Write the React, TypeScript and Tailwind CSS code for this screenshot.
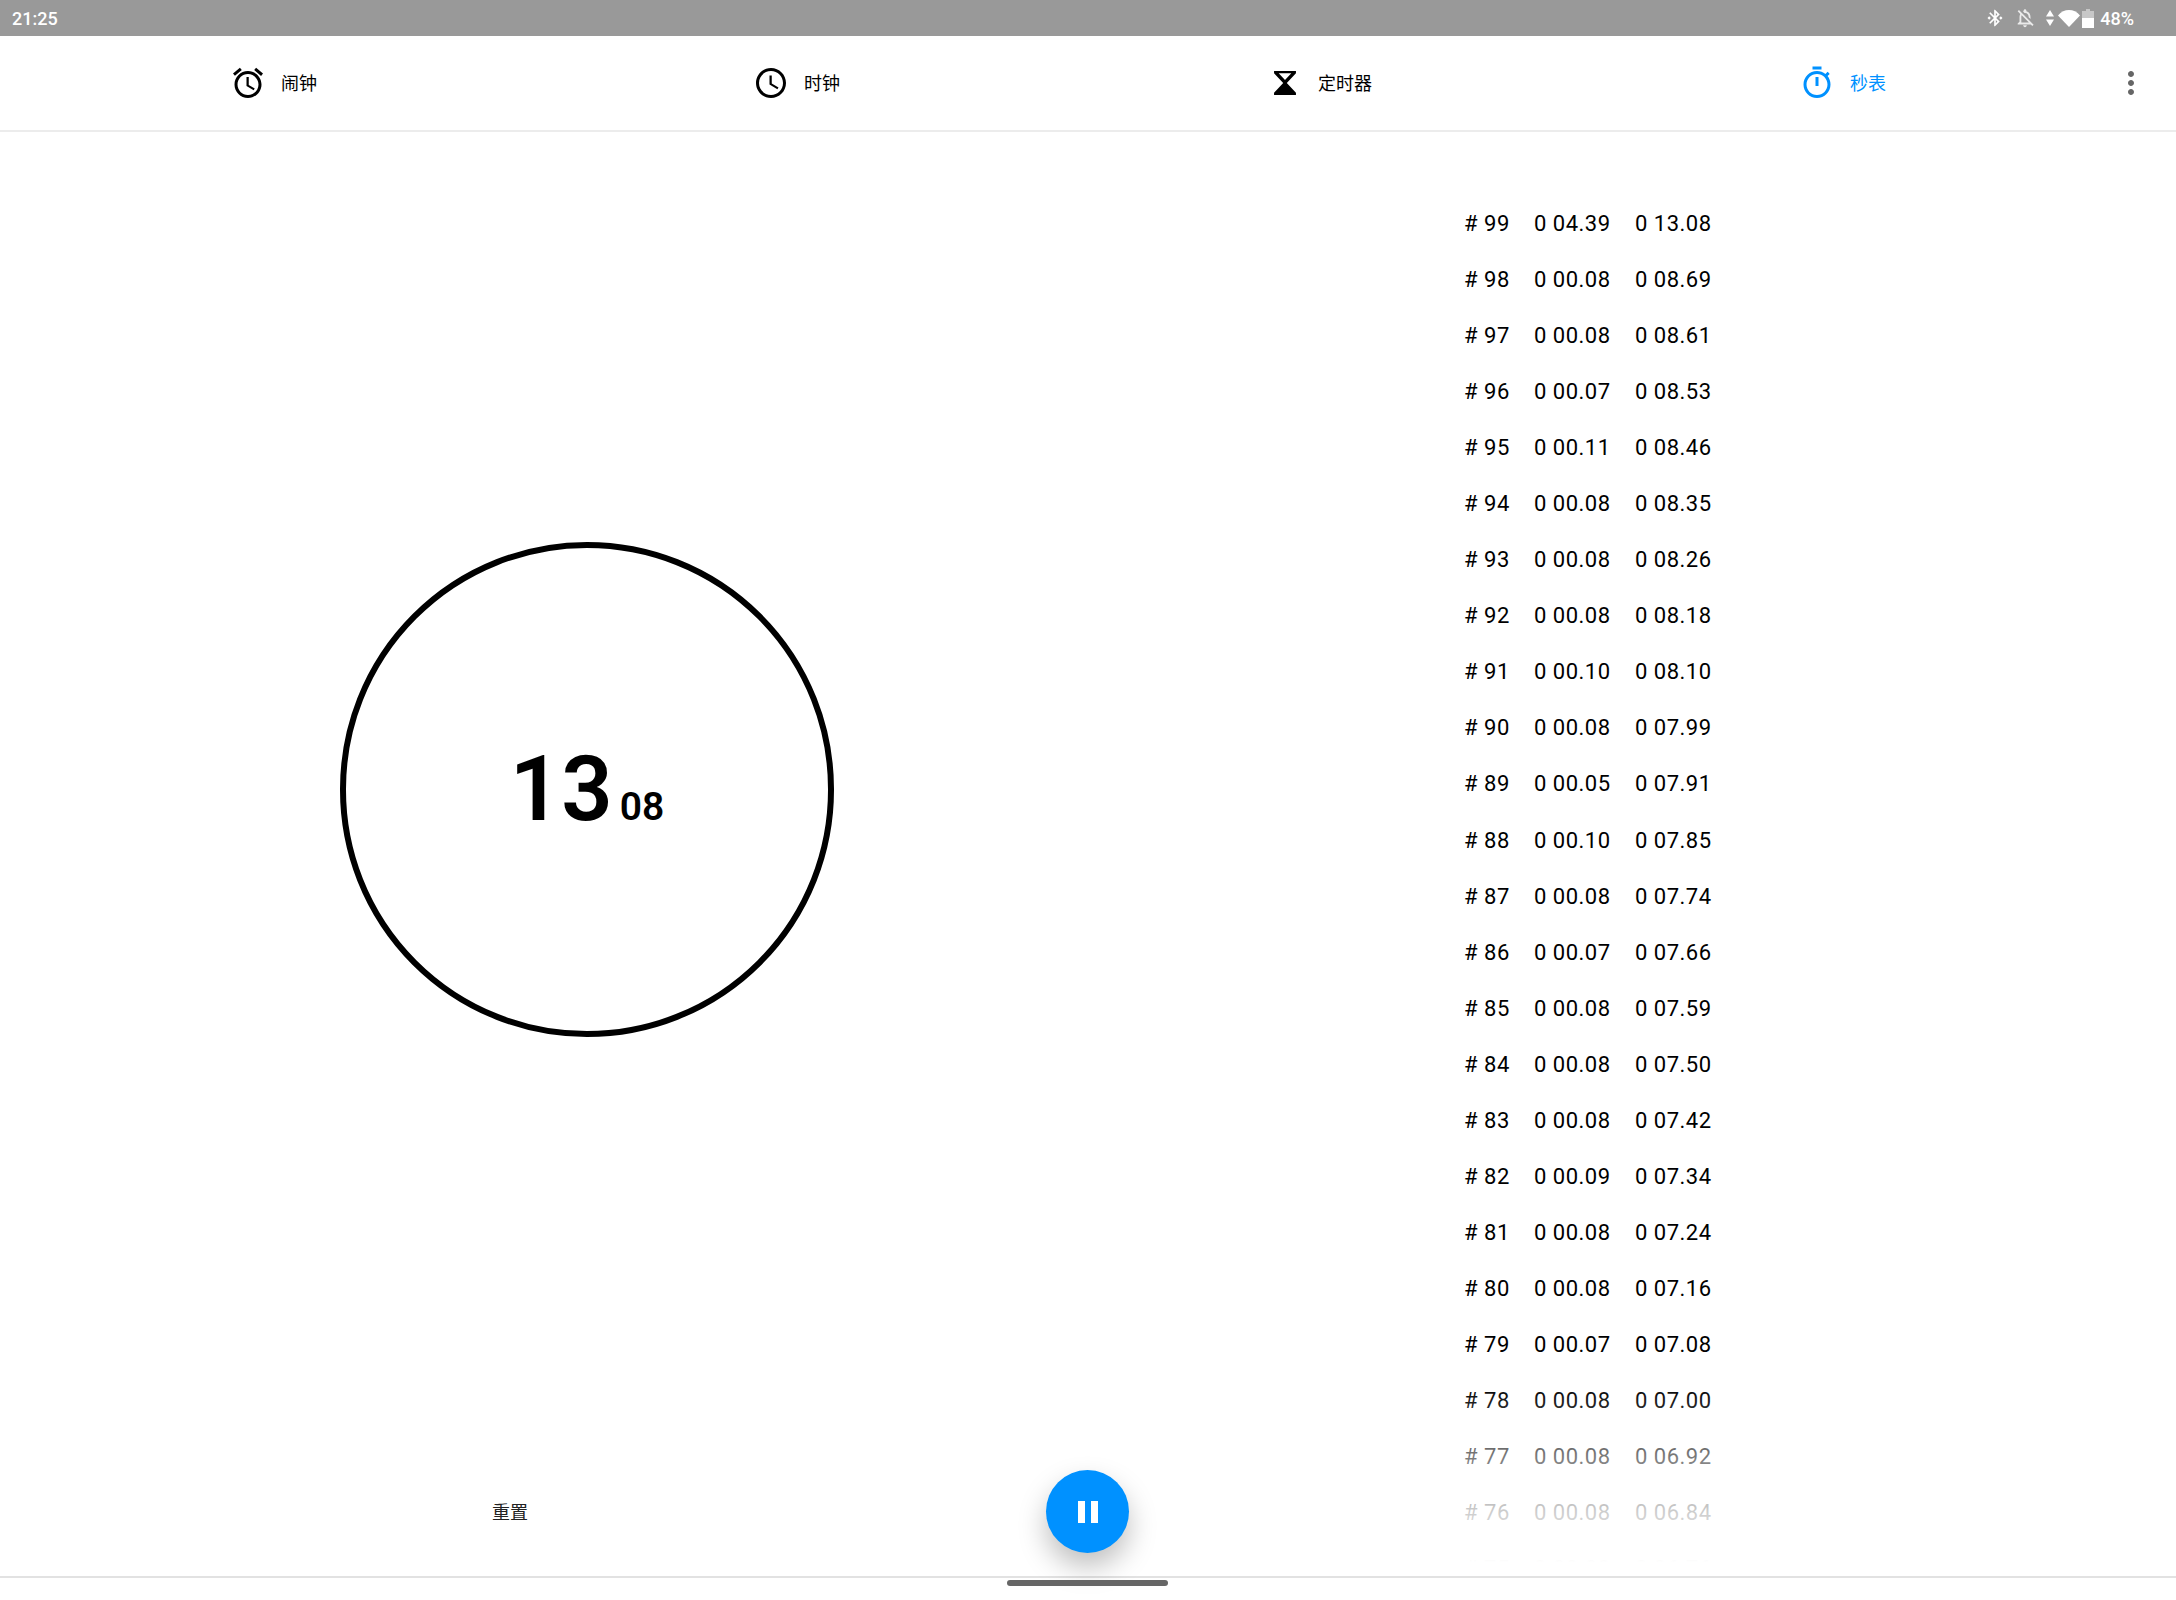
import React from 'react';

const laps = [
  ['99', '0 04.39', '0 13.08'],
  ['98', '0 00.08', '0 08.69'],
  ['97', '0 00.08', '0 08.61'],
  ['96', '0 00.07', '0 08.53'],
  ['95', '0 00.11', '0 08.46'],
  ['94', '0 00.08', '0 08.35'],
  ['93', '0 00.08', '0 08.26'],
  ['92', '0 00.08', '0 08.18'],
  ['91', '0 00.10', '0 08.10'],
  ['90', '0 00.08', '0 07.99'],
  ['89', '0 00.05', '0 07.91'],
  ['88', '0 00.10', '0 07.85'],
  ['87', '0 00.08', '0 07.74'],
  ['86', '0 00.07', '0 07.66'],
  ['85', '0 00.08', '0 07.59'],
  ['84', '0 00.08', '0 07.50'],
  ['83', '0 00.08', '0 07.42'],
  ['82', '0 00.09', '0 07.34'],
  ['81', '0 00.08', '0 07.24'],
  ['80', '0 00.08', '0 07.16'],
  ['79', '0 00.07', '0 07.08'],
  ['78', '0 00.08', '0 07.00'],
  ['77', '0 00.08', '0 06.92'],
  ['76', '0 00.08', '0 06.84'],
  ['75', '0 00.08', '0 06.76'],
];

function MaterialIcon({ d, className }: { d: string; className?: string }): JSX.Element {
  return (
    <svg viewBox="0 0 24 24" fill="currentColor" className={className}>
      <path d={d} />
    </svg>
  );
}

const ALARM =
  'M22 5.72l-4.6-3.86-1.29 1.53 4.6 3.86L22 5.72zM7.88 3.39L6.6 1.86 2 5.71l1.29 1.53 4.59-3.85zM12.5 8H11v6l4.75 2.85.75-1.23-4-2.37V8zM12 4c-4.97 0-9 4.03-9 9s4.02 9 9 9c4.97 0 9-4.03 9-9s-4.03-9-9-9zm0 16c-3.87 0-7-3.13-7-7s3.13-7 7-7 7 3.13 7 7-3.13 7-7 7z';
const CLOCK =
  'M11.99 2C6.47 2 2 6.48 2 12s4.47 10 9.99 10C17.52 22 22 17.52 22 12S17.52 2 11.99 2zM12 20c-4.42 0-8-3.58-8-8s3.58-8 8-8 8 3.58 8 8-3.58 8-8 8zM12.5 7H11v6l5.25 3.15.75-1.23-4.5-2.67z';
const TIMER =
  'M15 1H9v2h6V1zm-4 13h2V8h-2v6zm8.03-6.61l1.42-1.42c-.43-.51-.9-.99-1.41-1.41l-1.42 1.42C16.07 4.74 14.12 4 12 4c-4.97 0-9 4.03-9 9s4.02 9 9 9 9-4.03 9-9c0-2.12-.74-4.07-1.97-5.61zM12 20c-3.87 0-7-3.13-7-7s3.13-7 7-7 7 3.13 7 7-3.13 7-7 7z';
const MORE =
  'M12 8c1.1 0 2-.9 2-2s-.9-2-2-2-2 .9-2 2 .9 2 2 2zm0 2c-1.1 0-2 .9-2 2s.9 2 2 2 2-.9 2-2-.9-2-2-2zm0 6c-1.1 0-2 .9-2 2s.9 2 2 2 2-.9 2-2-.9-2-2-2z';
const BLUETOOTH =
  'M7 12l-2-2-2 2 2 2 2-2zm10.71-4.29L12 2h-1v7.59L6.41 5 5 6.41 10.59 12 5 17.59 6.41 19 11 14.41V22h1l5.71-5.71-4.3-4.29 4.3-4.29zM13 5.83l1.88 1.88L13 9.59V5.83zm1.88 10.46L13 18.17v-3.76l1.88 1.88zM19 10l-2 2 2 2 2-2-2-2z';
const BELL_OFF =
  'M12 22c1.1 0 2-.9 2-2h-4c0 1.1.9 2 2 2zm0-15.5c2.49 0 4 2.02 4 4.5v.1l2 2V11c0-3.07-1.63-5.64-4.5-6.32V4c0-.83-.67-1.5-1.5-1.5s-1.5.67-1.5 1.5v.68c-.24.06-.47.15-.69.23l1.64 1.64c.18-.02.37-.05.55-.05zM5.41 3.35L4 4.76l2.81 2.81C6.29 8.57 6 9.74 6 11v5l-2 2v1h14.24l1.74 1.74 1.41-1.41L5.41 3.35zM16 17H8v-6c0-.68.12-1.32.34-1.9L16 16.76V17z';

function Hourglass(): JSX.Element {
  return (
    <svg viewBox="0 0 24 24" className="w-9 h-9">
      <path
        fillRule="evenodd"
        fill="currentColor"
        d="M4.7 4H19.3V5.5L13.2 12L19.3 18.5V20H4.7V18.5L10.8 12L4.7 5.5ZM7.8 5.5H16.2L12 10Z"
      />
    </svg>
  );
}

function StatusBar(): JSX.Element {
  return (
    <div className="h-9 shrink-0 bg-[#999999] flex items-center text-white text-[18px] font-medium pl-3 pr-[42px]">
      <span>21:25</span>
      <div className="ml-auto flex items-center">
        <MaterialIcon d={BLUETOOTH} className="w-5 h-5" />
        <MaterialIcon d={BELL_OFF} className="w-[22px] h-[22px] ml-[9px] opacity-80" />
        <svg viewBox="0 0 8 16" className="w-2 h-4 ml-[10px]" fill="currentColor">
          <path d="M4 0L8 6.5H0ZM4 16L0 9.5H8Z" />
        </svg>
        <svg viewBox="0 0 22 17" className="w-[22px] h-[17px] ml-[4px]" fill="currentColor">
          <path d="M0 5.5C6 -1.8 16 -1.8 22 5.5L11 17Z" />
        </svg>
        <svg viewBox="0 0 12 19" className="w-3 h-[19px] ml-[2px]">
          <path d="M4 0H8V2H12V19H0V2H4Z" fill="#ffffff" opacity="0.45" />
          <path d="M0 9H12V19H0Z" fill="#ffffff" />
        </svg>
        <span className="ml-[6px]">48%</span>
      </div>
    </div>
  );
}

function Tab({
  icon,
  label,
  active,
}: {
  icon: React.ReactNode;
  label: string;
  active?: boolean;
}): JSX.Element {
  return (
    <div className={`flex items-center justify-center gap-[15px] ${active ? 'text-[#0091ff]' : 'text-black'}`}>
      {icon}
      <span className="text-[18px] mt-[1px]">{label}</span>
    </div>
  );
}

function TabBar(): JSX.Element {
  return (
    <div className="h-24 shrink-0 flex items-center border-b-2 border-[#ececec] pl-3">
      <div className="w-[2092px] grid grid-cols-4">
        <Tab icon={<MaterialIcon d={ALARM} className="w-9 h-9" />} label="闹钟" />
        <Tab icon={<MaterialIcon d={CLOCK} className="w-9 h-9" />} label="时钟" />
        <Tab icon={<Hourglass />} label="定时器" />
        <Tab icon={<MaterialIcon d={TIMER} className="w-9 h-9" />} label="秒表" active />
      </div>
      <MaterialIcon d={MORE} className="w-9 h-9 ml-[9px] text-[#666666]" />
    </div>
  );
}

function Dial(): JSX.Element {
  return (
    <div className="w-[494px] h-[495px] ml-[340px] mt-[410px] rounded-full border-[6px] border-black flex items-center justify-center">
      <div className="flex items-baseline font-semibold text-black leading-none">
        <span className="text-[90px]">13</span>
        <span className="text-[39px] ml-[7px]">08</span>
      </div>
    </div>
  );
}

function LapList(): JSX.Element {
  return (
    <div className="relative flex-1 pt-16 pl-[289px] text-[22px] leading-4 tracking-[0.5px] text-black">
      {laps.map((lap) => (
        <div key={lap[0]} className="h-[56.05px] flex items-center whitespace-nowrap">
          <span className="w-[70px]"># {lap[0]}</span>
          <span className="w-[101px]">{lap[1]}</span>
          <span>{lap[2]}</span>
        </div>
      ))}
      {/* list fades out above the bottom rule */}
      <div className="absolute inset-x-0 bottom-0 h-[192px] bg-[linear-gradient(to_bottom,rgba(255,255,255,0)_0%,rgba(255,255,255,0.47)_37%,rgba(255,255,255,0.8)_66%,rgba(255,255,255,0.98)_91%,rgba(255,255,255,1)_93%)]" />
    </div>
  );
}

export default function App(): JSX.Element {
  return (
    <div className="w-[2176px] h-[1600px] bg-white flex flex-col overflow-hidden font-['Roboto','Noto_Sans_CJK_SC',sans-serif]">
      <StatusBar />
      <TabBar />
      <div className="flex-1 flex min-h-0 border-b-2 border-[#e2e2e2]">
        <div className="w-[1175px] shrink-0 flex flex-col">
          <Dial />
          {/* Reset + pause controls */}
          <div className="mt-auto mb-[23px] h-[83px] flex items-center">
            <span className="ml-[492px] mt-[2px] w-9 text-[18px] text-[#222222] whitespace-nowrap">重置</span>
            <button className="ml-[518px] w-[83px] h-[83px] rounded-full bg-[#0091ff] shadow-[0_14px_28px_rgba(0,0,0,0.25)] flex items-center justify-center gap-[6px]">
              <span className="w-[7px] h-[22px] bg-white" />
              <span className="w-[7px] h-[22px] bg-white" />
            </button>
          </div>
        </div>
        <LapList />
      </div>
      <div className="h-[22px] shrink-0 pt-[2px] pr-[2px] flex justify-center">
        <div className="w-[161px] h-[6px] rounded-full bg-[#666666]" />
      </div>
    </div>
  );
}
